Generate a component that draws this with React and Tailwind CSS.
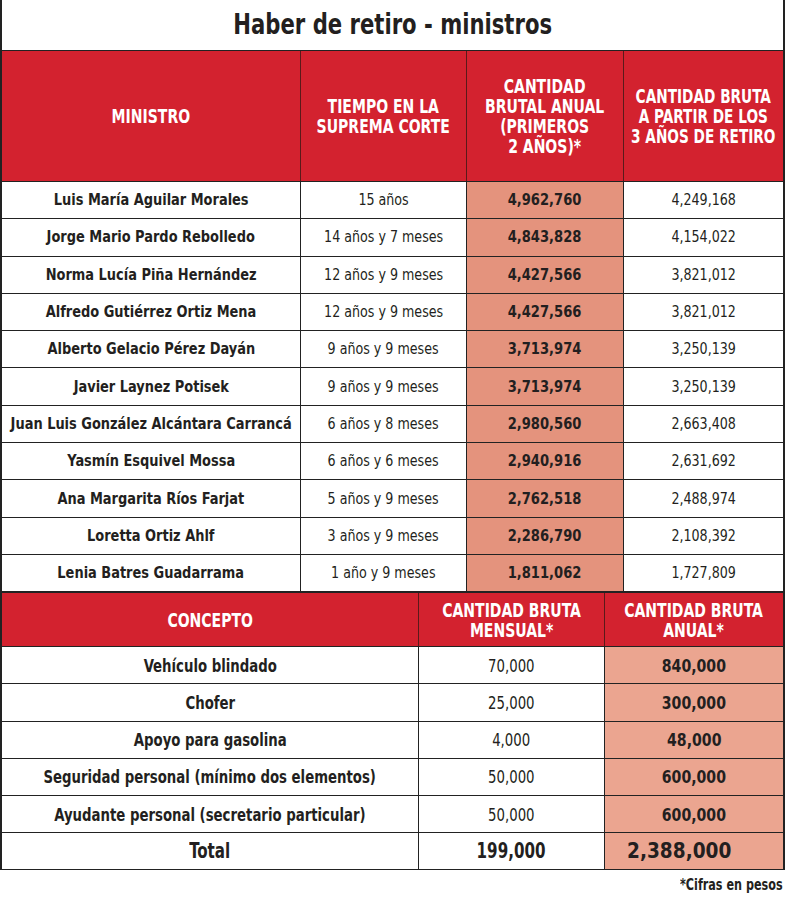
import React from "react";

const ministros = [
  ["Luis María Aguilar Morales", "15 años", "4,962,760", "4,249,168"],
  ["Jorge Mario Pardo Rebolledo", "14 años y 7 meses", "4,843,828", "4,154,022"],
  ["Norma Lucía Piña Hernández", "12 años y 9 meses", "4,427,566", "3,821,012"],
  ["Alfredo Gutiérrez Ortiz Mena", "12 años y 9 meses", "4,427,566", "3,821,012"],
  ["Alberto Gelacio Pérez Dayán", "9 años y 9 meses", "3,713,974", "3,250,139"],
  ["Javier Laynez Potisek", "9 años y 9 meses", "3,713,974", "3,250,139"],
  ["Juan Luis González Alcántara Carrancá", "6 años y 8 meses", "2,980,560", "2,663,408"],
  ["Yasmín Esquivel Mossa", "6 años y 6 meses", "2,940,916", "2,631,692"],
  ["Ana Margarita Ríos Farjat", "5 años y 9 meses", "2,762,518", "2,488,974"],
  ["Loretta Ortiz Ahlf", "3 años y 9 meses", "2,286,790", "2,108,392"],
  ["Lenia Batres Guadarrama", "1 año y 9 meses", "1,811,062", "1,727,809"],
];

const conceptos = [
  ["Vehículo blindado", "70,000", "840,000"],
  ["Chofer", "25,000", "300,000"],
  ["Apoyo para gasolina", "4,000", "48,000"],
  ["Seguridad personal (mínimo dos elementos)", "50,000", "600,000"],
  ["Ayudante personal (secretario particular)", "50,000", "600,000"],
];

const font = {
  fontFamily: '"DejaVu Sans Condensed", "Liberation Sans", sans-serif',
};

// narrow text: the source uses a condensed face, squeeze the glyphs horizontally
function N({ className = "", children }) {
  return <span className={`inline-block whitespace-nowrap ${className}`}>{children}</span>;
}

const cols1 = "grid grid-cols-[299px_166px_157px_minmax(0,1fr)]";
const cols2 = "grid grid-cols-[417px_186px_minmax(0,1fr)]";

export default function App() {
  return (
    <div className="w-[785px] h-[901px] bg-white text-[#231f20]" style={font}>
      <div className="border-x-2 border-[#222]">
        {/* Title */}
        <div className="h-[51px] flex items-center justify-center border-b border-[#222]">
          <h1 className="text-[28px] font-bold leading-none">
            <N className="scale-x-[0.84]">Haber de retiro - ministros</N>
          </h1>
        </div>

        {/* Ministros */}
        <div className={`${cols1} h-[131px] bg-[#d3222f] text-white font-bold text-[19px] leading-[20px] text-center border-b border-[#222]`}>
          <div className="min-w-0 flex items-center justify-center border-r border-[#5a1a1a]">
            <N className="scale-x-[0.82]">MINISTRO</N>
          </div>
          <div className="min-w-0 flex items-center justify-center border-r border-[#5a1a1a]">
            <N className="scale-x-[0.82]">
              TIEMPO EN LA<br />SUPREMA CORTE
            </N>
          </div>
          <div className="min-w-0 flex items-center justify-center border-r border-[#5a1a1a]">
            <N className="scale-x-[0.82]">
              CANTIDAD<br />BRUTAL ANUAL<br />(PRIMEROS<br />2 AÑOS)*
            </N>
          </div>
          <div className="min-w-0 flex items-center justify-center">
            <N className="shrink-0 scale-x-[0.8]">
              CANTIDAD BRUTA<br />A PARTIR DE LOS<br />3 AÑOS DE RETIRO
            </N>
          </div>
        </div>
        {ministros.map((m) => (
          <div
            key={m[0]}
            className={`${cols1} h-[37.3px] border-b border-[#222] text-[16px] text-center`}
          >
            <div className="min-w-0 flex items-center justify-center font-bold border-r border-[#222]">
              <N className="shrink-0 scale-x-[0.9]">{m[0]}</N>
            </div>
            <div className="min-w-0 flex items-center justify-center border-r border-[#222]">
              <N className="scale-x-[0.88]">{m[1]}</N>
            </div>
            <div className="min-w-0 flex items-center justify-center font-bold bg-[#e4937d] border-r border-[#222]">
              <N className="scale-x-[0.91]">{m[2]}</N>
            </div>
            <div className="min-w-0 flex items-center justify-center">
              <N className="scale-x-[0.88]">{m[3]}</N>
            </div>
          </div>
        ))}

        {/* Conceptos */}
        <div className={`${cols2} h-[55px] bg-[#d3222f] text-white font-bold text-[19px] leading-[20px] text-center border-t border-b border-[#222]`}>
          <div className="min-w-0 flex items-center justify-center border-r border-[#5a1a1a]">
            <N className="scale-x-[0.82]">CONCEPTO</N>
          </div>
          <div className="min-w-0 flex items-center justify-center border-r border-[#5a1a1a]">
            <N className="scale-x-[0.82]">
              CANTIDAD BRUTA<br />MENSUAL*
            </N>
          </div>
          <div className="min-w-0 flex items-center justify-center">
            <N className="scale-x-[0.82]">
              CANTIDAD BRUTA<br />ANUAL*
            </N>
          </div>
        </div>
        {conceptos.map((c, i) => (
          <div
            key={i}
            className={`${cols2} h-[37.2px] border-b border-[#222] text-[18px] text-center`}
          >
            <div className="min-w-0 flex items-center justify-center font-bold border-r border-[#222]">
              <N className="scale-x-[0.82]">{c[0]}</N>
            </div>
            <div className="min-w-0 flex items-center justify-center border-r border-[#222]">
              <N className="scale-x-[0.82]">{c[1]}</N>
            </div>
            <div className="min-w-0 flex items-center justify-center font-bold bg-[#eba590]">
              <N className="scale-x-[0.87]">{c[2]}</N>
            </div>
          </div>
        ))}
        <div className={`${cols2} h-[37.2px] border-b border-[#222] text-[21px] font-bold text-center`}>
          <div className="min-w-0 flex items-center justify-center border-r border-[#222]">
            <N className="scale-x-[0.8]">Total</N>
          </div>
          <div className="min-w-0 flex items-center justify-center border-r border-[#222]">
            <N className="scale-x-[0.8]">199,000</N>
          </div>
          <div className="min-w-0 flex items-center justify-center pr-[30px] bg-[#eba590]">
            <N className="scale-x-[0.98]">2,388,000</N>
          </div>
        </div>
      </div>
      <div className="flex justify-end pr-[2px] mt-[4px]">
        <N className="text-[15px] font-bold origin-right scale-x-[0.83]">*Cifras en pesos</N>
      </div>
    </div>
  );
}
